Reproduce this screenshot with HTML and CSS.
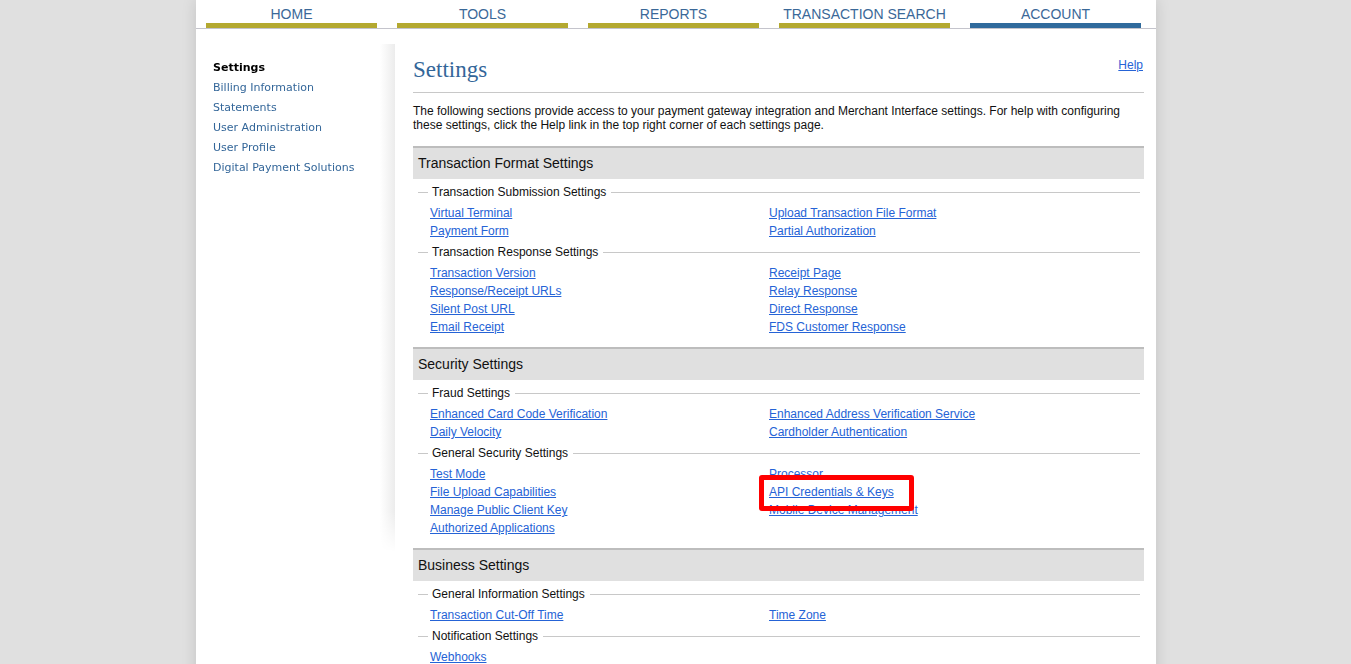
FILE: index.html
```html
<!DOCTYPE html>
<html>
<head>
<meta charset="utf-8">
<link rel="stylesheet" href="styles.css">
</head>
<body>
<div class="page">
  <nav class="nav">
    <a class="tab">HOME</a>
    <a class="tab">TOOLS</a>
    <a class="tab">REPORTS</a>
    <a class="tab">TRANSACTION SEARCH</a>
    <a class="tab active">ACCOUNT</a>
  </nav>
  <div class="body">
    <aside class="side">
      <ul class="side-list">
        <li class="current">Settings</li>
        <li>Billing Information</li>
        <li>Statements</li>
        <li>User Administration</li>
        <li>User Profile</li>
        <li>Digital Payment Solutions</li>
      </ul>
    </aside>
    <main class="main">
      <div class="title-row">
        <h1 class="title">Settings</h1>
        <a class="help" href="#">Help</a>
      </div>
      <p class="intro">The following sections provide access to your payment gateway integration and Merchant Interface settings. For help with configuring these settings, click the Help link in the top right corner of each settings page.</p>

      <section class="sec">
        <h2 class="band">Transaction Format Settings</h2>
        <div class="sub">Transaction Submission Settings</div>
        <div class="links">
          <div class="col"><a href="#">Virtual Terminal</a><a href="#">Payment Form</a></div>
          <div class="col"><a href="#">Upload Transaction File Format</a><a href="#">Partial Authorization</a></div>
        </div>
        <div class="sub">Transaction Response Settings</div>
        <div class="links">
          <div class="col"><a href="#">Transaction Version</a><a href="#">Response/Receipt URLs</a><a href="#">Silent Post URL</a><a href="#">Email Receipt</a></div>
          <div class="col"><a href="#">Receipt Page</a><a href="#">Relay Response</a><a href="#">Direct Response</a><a href="#">FDS Customer Response</a></div>
        </div>
      </section>

      <section class="sec">
        <h2 class="band">Security Settings</h2>
        <div class="sub">Fraud Settings</div>
        <div class="links">
          <div class="col"><a href="#">Enhanced Card Code Verification</a><a href="#">Daily Velocity</a></div>
          <div class="col"><a href="#">Enhanced Address Verification Service</a><a href="#">Cardholder Authentication</a></div>
        </div>
        <div class="sub">General Security Settings</div>
        <div class="links">
          <div class="col"><a href="#">Test Mode</a><a href="#">File Upload Capabilities</a><a href="#">Manage Public Client Key</a><a href="#">Authorized Applications</a></div>
          <div class="col"><a href="#">Processor</a><span class="marked"><a href="#">API Credentials &amp; Keys</a><span class="highlight"></span></span><a href="#">Mobile Device Management</a></div>
        </div>
      </section>

      <section class="sec">
        <h2 class="band">Business Settings</h2>
        <div class="sub">General Information Settings</div>
        <div class="links">
          <div class="col"><a href="#">Transaction Cut-Off Time</a></div>
          <div class="col"><a href="#">Time Zone</a></div>
        </div>
        <div class="sub">Notification Settings</div>
        <div class="links">
          <div class="col"><a href="#">Webhooks</a></div>
          <div class="col"></div>
        </div>
      </section>
    </main>
  </div>
</div>
</body>
</html>
```

FILE: styles.css
```css
html, body {
  margin: 0;
  padding: 0;
  background: #e0e0e0;
  font-family: "Liberation Sans", Arial, sans-serif;
  overflow: hidden;
}

.page {
  width: 960px;
  margin: 0 0 0 calc(50% - 479.5px);
  background: #fff;
  min-height: 800px;
  box-shadow: 0 0 14px rgba(0, 0, 0, 0.13);
}

.nav {
  display: flex;
  gap: 20px;
  padding-left: 10px;
  border-bottom: 1px solid #c4c4cc;
}

.tab {
  width: 171px;
  height: 17px;
  padding-top: 6px;
  line-height: 16px;
  font-size: 14px;
  text-align: center;
  color: #3a6898;
  border-bottom: 5px solid #b4a930;
}

.tab.active {
  border-bottom-color: #2f6a9c;
}

.body {
  display: flex;
  align-items: flex-start;
}

.side {
  width: 199px;
  height: 508px;
  margin-top: 15px;
  background: linear-gradient(to right, #ffffff 184px, #ececec 199px);
  -webkit-mask-image: linear-gradient(to bottom, #000 92%, transparent 100%);
  mask-image: linear-gradient(to bottom, #000 92%, transparent 100%);
}

.side-list {
  list-style: none;
  margin: 0;
  padding: 14px 0 0 17px;
  font-family: Verdana, "DejaVu Sans", sans-serif;
  font-size: 11px;
  line-height: 20px;
  color: #336699;
}

.side-list .current {
  color: #000;
  font-weight: bold;
}

.main {
  width: 731px;
  margin-left: 18px;
  padding-top: 26px;
}

.title-row {
  display: flex;
  justify-content: space-between;
  align-items: flex-start;
  border-bottom: 1px solid #c8c8c8;
  padding-bottom: 9px;
}

.title {
  margin: 0;
  padding-top: 2px;
  font-family: "Liberation Serif", Georgia, serif;
  font-weight: normal;
  font-size: 23px;
  line-height: 26px;
  color: #336699;
}

.help {
  margin-top: 3px;
  margin-right: 1px;
  font-size: 12px;
  line-height: 14px;
  color: #2563d6;
}

.intro {
  margin: 11px 0 14px;
  font-size: 12px;
  line-height: 14px;
  color: #111;
}

.sec {
  margin-bottom: 11px;
}

.band {
  margin: 0;
  height: 31px;
  line-height: 31px;
  border-top: 2px solid #bdbdbd;
  background: #e0e0e0;
  padding-left: 5px;
  font-size: 14px;
  font-weight: normal;
  color: #111;
}

.sub {
  display: flex;
  align-items: center;
  gap: 4px;
  margin: 3px 4px 0 5px;
  height: 18px;
  font-size: 12px;
  color: #111;
}

.band + .sub {
  margin-top: 4px;
}

.sub::before {
  content: "";
  width: 10px;
  height: 1px;
  background: #c8c8c8;
}

.sub::after {
  content: "";
  flex: 1;
  height: 1px;
  margin-left: 1px;
  background: #c8c8c8;
}

.links {
  display: grid;
  grid-template-columns: 339px 1fr;
  margin-top: 3px;
  padding-left: 17px;
}

.col {
  display: flex;
  flex-direction: column;
  align-items: flex-start;
}

.col a {
  display: block;
  font-size: 12px;
  line-height: 18px;
  color: #2563d6;
  text-decoration: underline;
}

.marked {
  position: relative;
  display: block;
}

.highlight {
  position: absolute;
  left: -10px;
  top: -8px;
  width: 145px;
  height: 26px;
  border: 5px solid #ff0000;
  border-radius: 3px;
  pointer-events: none;
}
```
